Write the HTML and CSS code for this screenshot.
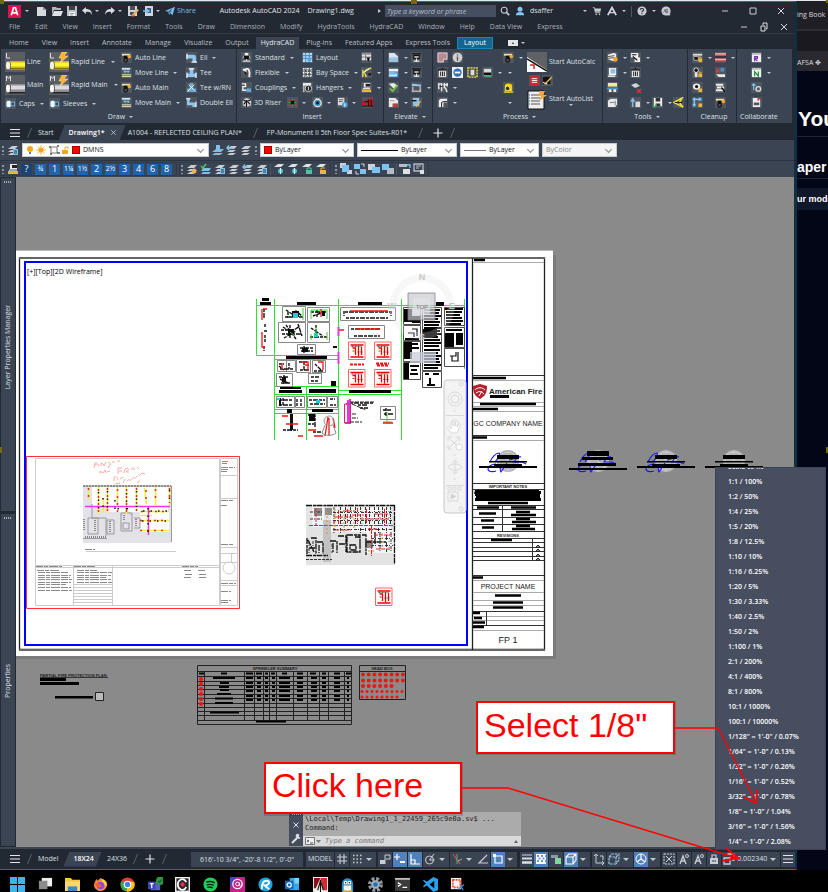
FILE: index.html
```html
<!DOCTYPE html>
<html lang="en">
<head>
<meta charset="utf-8">
<title>Autodesk AutoCAD 2024 - Drawing1.dwg</title>
<link rel="stylesheet" href="styles.css">
</head>
<body>
<svg class="defs" aria-hidden="true">
<defs>
<symbol id="new" viewBox="0 0 12 12"><path d="M1 2h6l3 3v6H1z" fill="#d6d9dd"/><path d="M7 2v3h4" fill="#8c939c"/></symbol>
<symbol id="open" viewBox="0 0 12 12"><path d="M1 2h4l1 1h4v2H3l-2 5z" fill="#aeb4bb"/><path d="M3 6h9l-2 5H1z" fill="#dfe2e5"/></symbol>
<symbol id="save" viewBox="0 0 12 12"><path d="M1 1h10v10H1z" fill="#b9bec4"/><path d="M3 1h6v4H3z" fill="#39414d"/><path d="M3 7h6v4H3z" fill="#f3f4f5"/><path d="M4 8.5h4M4 10h3" stroke="#777" stroke-width=".7"/></symbol>
<symbol id="saveas" viewBox="0 0 12 12"><path d="M1 1h9v10H1z" fill="#d0d3d7"/><path d="M3 1h5v4H3zM3 7h5v3H3z" fill="#4a515c"/><path d="M5 10l5-6 2 1-5 6z" fill="#eab35c"/><path d="M4 11h4" stroke="#d33"/></symbol>
<symbol id="undo" viewBox="0 0 12 12"><path d="M5 2L1 5.500l4 3.500V7c3-1 5 0 6 3 0-4-2-6-6-6z" fill="#d6d9dd"/></symbol>
<symbol id="redo" viewBox="0 0 12 12"><path d="M7 2l4 3.500-4 3.500V7c-3-1-5 0-6 3 0-4 2-6 6-6z" fill="#d6d9dd"/></symbol>
<symbol id="plot" viewBox="0 0 12 12"><path d="M3 1h8v10H3z" fill="#cfd4da"/><path d="M5 3h4v5H5z" fill="#31618d"/><path d="M1 6h5M4 4l3 2-3 2" stroke="#7cc0f0" stroke-width="1.500" fill="none"/></symbol>
<symbol id="plane" viewBox="0 0 12 12"><path d="M0 6L12 1 9 11 6 8 5 11 4 7z" fill="#79bdea"/><path d="M4 7l5-4-3 5z" fill="#245273"/></symbol>
<symbol id="search" viewBox="0 0 12 12"><circle cx="5" cy="5" r="3.600" fill="none" stroke="#c8ccd2" stroke-width="1.300"/><path d="M8 8l3 3" stroke="#c8ccd2" stroke-width="2"/></symbol>
<symbol id="user" viewBox="0 0 12 12"><circle cx="6" cy="4" r="3" fill="#86c5f2"/><path d="M1 11c0-5 10-5 10 0z" fill="#86c5f2"/></symbol>
<symbol id="cart" viewBox="0 0 12 12"><path d="M1 2h2l1 6h6" stroke="#c8ccd2" fill="none"/><path d="M3 3h8l-1 4H4z" fill="#c8ccd2"/><circle cx="5" cy="10" r="1" fill="#ccc"/><circle cx="9" cy="10" r="1" fill="#ccc"/></symbol>
<symbol id="aa" viewBox="0 0 12 12"><path d="M1 11l5-9 5 9" fill="none" stroke="#d3d6da" stroke-width="2.200"/><path d="M3 8h6" stroke="#d3d6da" stroke-width="1.500"/></symbol>
<symbol id="help" viewBox="0 0 12 12"><circle cx="6" cy="6" r="5.500" fill="#c8ccd2"/><path d="M4 4.500c0-2 4-2 4 0 0 1.500-2 1-2 3M6 8.500v1.200" stroke="#222933" stroke-width="1.300" fill="none"/></symbol>
<symbol id="chat" viewBox="0 0 12 12"><path d="M6 .5a5.500 5.500 0 1 1-1 11L11 11V6" fill="#c8ccd2"/><circle cx="6" cy="6" r="5.500" fill="#c8ccd2"/><path d="M3 8l2-4 1 4M6 4h2v4H6z" stroke="#5c6470" fill="none"/></symbol>
<symbol id="min" viewBox="0 0 12 12"><path d="M3 6h6" stroke="#c8ccd2"/></symbol>
<symbol id="max" viewBox="0 0 12 12"><path d="M3 3h6v6H3z" fill="none" stroke="#c8ccd2"/></symbol>
<symbol id="restore" viewBox="0 0 12 12"><path d="M3 5h4v5H3zM5 4V2h4v6H8" fill="none" stroke="#dcdfe3"/></symbol>
<symbol id="close" viewBox="0 0 12 12"><path d="M3 3l6 6M9 3l-6 6" stroke="#d3d6da" fill="none"/></symbol>
<symbol id="bars" viewBox="0 0 12 12"><path d="M1 2.500h10M1 6h10M1 9.500h10" stroke="#e3e6e9" stroke-width="1.100"/></symbol>
<symbol id="plus" viewBox="0 0 12 12"><path d="M6 1.500v9M1.500 6h9" stroke="#e3e6e9" stroke-width="1.200"/></symbol>

<symbol id="pipeY" viewBox="0 0 20 20"><path d="M0 0h20v20H0z" fill="#5b5e62"/><path d="M1.500 1v5H5" stroke="#ddd" fill="none"/><path d="M3 9h17v9H3z" fill="#c9bc00"/><path d="M3 10.500h17v4H3z" fill="#fdf53a"/><path d="M3 16h17v1.500H3z" fill="#7d7300"/><ellipse cx="3" cy="13.500" rx="2.500" ry="4.500" fill="#f2f2e8" stroke="#333" stroke-width=".7"/></symbol>
<symbol id="pipeG" viewBox="0 0 20 20"><path d="M0 0h20v20H0z" fill="#5b5e62"/><path d="M1.500 6V1l2 2.500 2-2.500v5" stroke="#ddd" fill="none"/><path d="M3 9h17v9H3z" fill="#8d8d93"/><path d="M3 10.500h17v4H3z" fill="#dadae0"/><path d="M3 17h17v1.500H3z" fill="#222"/><ellipse cx="3" cy="13.500" rx="2.500" ry="4.500" fill="#fff" stroke="#222" stroke-width=".8"/></symbol>
<symbol id="bolt" viewBox="0 0 20 20"><path d="M13 0h5l-3 4h4l-8 7 2-5h-3z" fill="#ffb12e" stroke="#fff0a0" stroke-width=".5"/></symbol>
<symbol id="auto" viewBox="0 0 12 12"><path d="M1 2h9v2H1z" fill="#efe7a8"/><path d="M3 4h5v3H3z" fill="#111"/><circle cx="5" cy="9" r="2" fill="none" stroke="#111" stroke-width="1.200"/><circle cx="9" cy="5" r="2" fill="#f7a531"/></symbol>
<symbol id="move" viewBox="0 0 12 12"><path d="M1 1h9v2H1z" fill="#c7e4fb"/><path d="M1 8h10v3H1z" fill="#f2eeb4"/><path d="M3 5h6M5 3.500L3 5l2 1.500M7 3.500L9 5 7 6.500" stroke="#86c3ef" fill="none"/><path d="M1 9.500h10" stroke="#333" stroke-width=".7"/></symbol>
<symbol id="ell" viewBox="0 0 12 12"><path d="M1 3h7c2 0 3 1 3 3v5H7V7H1z" fill="#8ec6ee"/><path d="M1 2v6M6 11h6" stroke="#eaf5fd" stroke-width="1.400"/></symbol>
<symbol id="tee" viewBox="0 0 12 12"><path d="M1 7h10v4H1zM4 1h4v7H4z" fill="#8ec6ee"/><path d="M3 2h6M1 6v6M11 6v6" stroke="#eaf5fd" stroke-width="1.300"/></symbol>
<symbol id="teern" viewBox="0 0 12 12"><path d="M1 7h10v4H1zM4 1h4v7H4z" fill="#6aa9d8"/><path d="M3 3l6 6M9 3l-7 7" stroke="#fff"/></symbol>
<symbol id="dell" viewBox="0 0 12 12"><path d="M1 1h3v5h7v5H7V9H1z" fill="#8ec6ee"/><path d="M0 2h5M11 5v6" stroke="#fff"/></symbol>
<symbol id="elbow" viewBox="0 0 12 12"><path d="M2 11V5c0-2 1-3 3-3h6v4H7v5z" fill="#eceef0"/><path d="M5 11V6l2-1h4" stroke="#111" fill="none"/></symbol>
<symbol id="caps" viewBox="0 0 12 12"><path d="M1 4h10v5H1z" fill="#7fb6de"/><path d="M2 3h4v7H2z" fill="#eef5fb"/><path d="M7 5h3v3H7z" fill="#2c4a66"/></symbol>
<symbol id="head" viewBox="0 0 12 12"><path d="M4 1h4v3H4z" fill="#eee"/><path d="M3 4h6l-1 4H4z" fill="#0d0d0d"/><path d="M2 10h8M6 8v2" stroke="#ddd" stroke-width="1.300"/><path d="M3 4l-1 3M9 4l1 3" stroke="#bbb"/></symbol>
<symbol id="flex" viewBox="0 0 12 12"><path d="M2 3h3v3M4 3c5-3 6 2 5 8" stroke="#f1f1f1" fill="none" stroke-width="2"/><path d="M4 5l2 3" stroke="#111" stroke-width="1.500"/></symbol>
<symbol id="hyd" viewBox="0 0 12 12"><path d="M1 2h5M2 2v6M5 2v8M8 1v6M11 1v4M7 3h5M9 6l2 5" stroke="#eceef0" stroke-width="1.500" fill="none"/><path d="M3 5h3" stroke="#111"/></symbol>
<symbol id="coup" viewBox="0 0 12 12"><path d="M1 2h4v3H2v4h4" stroke="#f1f1f1" fill="none" stroke-width="1.500"/><path d="M6 7h5v4H6z" fill="#5ea6dd"/></symbol>
<symbol id="riser" viewBox="0 0 12 12"><path d="M2 3l4-2 5 2v6l-5 2-4-2z" fill="#d7d7d7"/><path d="M3 8l3-4 4 4M6 4v7M2 3l4 2 5-2" stroke="#111" fill="none" stroke-width="1.200"/></symbol>
<symbol id="layout" viewBox="0 0 12 12"><path d="M1 1h10v10H1z" fill="#b8dcf6"/><path d="M1 4h10M1 7h10M4 1v10M8 1v10" stroke="#3983bf"/><path d="M6 6h4v4H6z" fill="#5ba6e0"/></symbol>
<symbol id="bay" viewBox="0 0 12 12"><path d="M1 2h10M1 6h10M1 10h10M2 1v10M6 1v10M10 1v10" stroke="#fff" stroke-width="1.300" stroke-dasharray="1.500 1"/></symbol>
<symbol id="hang" viewBox="0 0 12 12"><path d="M1 1h9v3H1z" fill="#e8e8e8"/><circle cx="7" cy="7" r="3.500" fill="#222" stroke="#ddd"/><path d="M7 5v4M2 2v9" stroke="#eee"/></symbol>
<symbol id="table" viewBox="0 0 12 12"><path d="M1 1h10v8H1z" fill="#e6e6e6"/><path d="M1 1h10v2H1z" fill="#8b9098"/><path d="M1 5.500h10M5 3v6" stroke="#555" stroke-width=".8"/><path d="M6 6h4l-2 5z" fill="#111"/></symbol>
<symbol id="fit" viewBox="0 0 12 12"><path d="M2 7l4-4 5-2M4 7l2 4M2 3v8" stroke="#e9d94a" fill="none" stroke-width="1.600"/><path d="M3 6l6-4" stroke="#fff"/><path d="M8 8h3" stroke="#111" stroke-width="2"/></symbol>
<symbol id="brush" viewBox="0 0 12 12"><path d="M3 1h7v5H3z" fill="#e8e8e8"/><path d="M5 2h5v3H5z" fill="#222"/><path d="M1 8h10v3H1z" fill="#e7b73c"/><path d="M2 7h8" stroke="#fff"/></symbol>
<symbol id="star" viewBox="0 0 12 12"><path d="M1 2l10 8M10 2L2 10" stroke="#d33" stroke-width="1"/><path d="M2 6h8M6 2v8" stroke="#39b54a"/><path d="M4 4h4v4H4z" fill="#111"/></symbol>
<symbol id="ring" viewBox="0 0 12 12"><circle cx="6" cy="6.500" r="4" fill="#2b87c5" stroke="#e2e2e2" stroke-width="1.500"/><path d="M4 1l2 2 2-2" stroke="#eee" fill="none"/><circle cx="6" cy="6.500" r="1.500" fill="#111"/></symbol>
<symbol id="pginfo" viewBox="0 0 12 12"><path d="M1 1h7v8H1z" fill="#d9dde1"/><path d="M2 3h5M2 5h4" stroke="#555"/><circle cx="8.500" cy="8.500" r="3" fill="#4b9fdb"/><path d="M8.500 7v3.500" stroke="#fff"/></symbol>
<symbol id="pump" viewBox="0 0 12 12"><path d="M0 4h4v5H0zM6 2h6v8H6z" fill="#c41420"/><path d="M3 5h5M7 3v7M10 3v7" stroke="#300" stroke-width="1.200"/><path d="M0 10h12" stroke="#111"/></symbol>
<symbol id="page" viewBox="0 0 12 12"><path d="M1 1h6l4 4v6H1z" fill="#d5e6f4"/><path d="M1 6h10v5H1z" fill="#9bc2e2"/></symbol>
<symbol id="pageb" viewBox="0 0 12 12"><path d="M1 2h10v3H1z" fill="#e8f1f8"/><path d="M1 5l10 1-1 5H1z" fill="#7fb8e4"/><path d="M1 9h9" stroke="#fff"/></symbol>
<symbol id="gcheck" viewBox="0 0 12 12"><path d="M1 2l5-1 5 3-5 3z" fill="#e8e8e8"/><path d="M2 7l3 3 5-6" stroke="#6cbf45" stroke-width="2" fill="none"/></symbol>
<symbol id="pred" viewBox="0 0 12 12"><path d="M1 1h7l3 3v7H1z" fill="#e9e9ea"/><path d="M5 7h6v4H5z" fill="#b24047"/><path d="M2 4h5" stroke="#999"/></symbol>
<symbol id="vtool" viewBox="0 0 12 12"><path d="M1 2h10M3 4h6v3H3z" stroke="#111" fill="#ddd" stroke-width="1.300"/><path d="M6 7v4M3 10h6" stroke="#eee" stroke-width="1.200"/></symbol>
<symbol id="slope" viewBox="0 0 12 12"><path d="M1 2l10 1v2L1 4z" fill="#9ccaf0"/><path d="M1 10h10M2 5v5M10 5v5" stroke="#e8e8e8"/></symbol>
<symbol id="edit" viewBox="0 0 12 12"><path d="M2 1h7v9H2z" fill="#8fc1e8"/><path d="M5 10l5-6 1 1-5 6z" fill="#f3c04c"/><path d="M1 4h5" stroke="#111" stroke-width="1.500"/></symbol>
<symbol id="area" viewBox="0 0 12 12"><path d="M1 1h10v7H7v3H1z" fill="#b98a8f"/><path d="M1 1h10v7H7v3H1z" fill="none" stroke="#ded5d6"/></symbol>
<symbol id="info" viewBox="0 0 12 12"><circle cx="6" cy="6" r="5.300" fill="#cfcfcf"/><path d="M6 5v4.500M6 2.500v1.300" stroke="#555" stroke-width="1.500"/></symbol>
<symbol id="trash" viewBox="0 0 12 12"><path d="M2 4h8v7H2z" fill="#e8e8e8"/><path d="M1 3h10M5 1.500h2M4 5v5M6 5v5M8 5v5" stroke="#111" stroke-width="1"/></symbol>
<symbol id="bluec" viewBox="0 0 12 12"><path d="M0 0h12v12H0z" fill="#e9eff6"/><circle cx="6" cy="6" r="4.500" fill="#2f70c0"/><path d="M3 6h6" stroke="#fff" stroke-width="2"/></symbol>
<symbol id="ybox" viewBox="0 0 12 12"><path d="M1 1h10v10H1z" fill="#555" stroke="#f0e640" stroke-width="1.500" stroke-dasharray="2 1"/><path d="M4 3h4v6H4z" fill="#ddd"/></symbol>
<symbol id="cyl" viewBox="0 0 12 12"><path d="M2 2h8v8H2z" fill="#d9d9d9"/><path d="M2 6h8v3H2z" fill="#111"/><path d="M4 9h6v2H4z" fill="#3cab6b"/></symbol>
<symbol id="tape" viewBox="0 0 12 12"><path d="M2 10V4c0-3 8-3 8 0v6" fill="#f2cf1d"/><circle cx="5" cy="7" r="2.500" fill="#333" stroke="#fff079"/><path d="M1 11h10" stroke="#f2cf1d" stroke-width="1.500"/></symbol>
<symbol id="calc" viewBox="0 0 20 20"><path d="M0 0h20v20H0z" fill="#5f6165"/><path d="M0 5l20 13v2H0z" fill="#fff"/><path d="M0 7l20 12" stroke="#111" stroke-width="1.500"/><path d="M3 13h4v4" stroke="#e0202a" fill="none" stroke-width="1.500"/></symbol>
<symbol id="list" viewBox="0 0 20 20"><path d="M1 1h16v18H1z" fill="#eceef0" stroke="#111"/><path d="M4 5h9M4 8h9M4 11h9M4 14h9" stroke="#555"/><path d="M2 5h1M2 8h1M2 11h1M2 14h1" stroke="#2b6fb2"/><path d="M13 1h5l-2 4h4l-8 6 2-5h-3z" fill="#f9a92c"/></symbol>
<symbol id="redl" viewBox="0 0 12 12"><path d="M1 1h10v10H1z" fill="#d2232e"/><path d="M3 4h6M3 6h6M3 8h6" stroke="#fff"/></symbol>
<symbol id="pen" viewBox="0 0 12 12"><path d="M1 2h8v8H1z" fill="#111"/><path d="M2 10l8-8 1 1-7 7z" fill="#f5c34c"/><path d="M1 8l5 2" stroke="#fff"/></symbol>
<symbol id="stack" viewBox="0 0 12 12"><path d="M1 3l6-2 3 1v7l-3 1-6-2z" fill="#f0f0f0"/><path d="M1 5l7-1M1 7l7-1" stroke="#444"/><circle cx="9" cy="8" r="2.500" fill="#f6a42d"/></symbol>
<symbol id="win" viewBox="0 0 12 12"><path d="M2 1h8v8H2z" fill="#f0f0f0"/><path d="M4 2h5v5H4z" fill="#8dbfe6"/><path d="M1 10h8" stroke="#fff" stroke-width="1.400"/></symbol>
<symbol id="frame" viewBox="0 0 12 12"><path d="M1 1h10v4H1z" fill="#f0e9a3"/><path d="M0 6h12v2H0z" fill="#3d92cf"/><path d="M2 8h3v3H2zM7 8h3v3H7z" fill="#e9e9e9"/></symbol>
<symbol id="box" viewBox="0 0 12 12"><path d="M1 4l3-2h7v6l-2 3H1z" fill="#e9e9e9"/><path d="M3 6h5M9 4v5" stroke="#777"/></symbol>
<symbol id="bw" viewBox="0 0 12 12"><path d="M1 1h8v5H1zM5 6h6v5H5z" fill="#f0f0f0"/><path d="M2 3h5M3 5l5 4" stroke="#111" stroke-width="1.300"/></symbol>
<symbol id="erase" viewBox="0 0 12 12"><path d="M1 3l5-2 4 3-5 2z" fill="#cfd2d6"/><path d="M7 7l4 4M11 7l-4 4" stroke="#e0303a" stroke-width="1.500"/></symbol>
<symbol id="up" viewBox="0 0 12 12"><path d="M3 11V3M1 5l2-3 2 3" stroke="#7fc0f2" stroke-width="1.500" fill="none"/><path d="M6 5h5v6H6z" fill="#dcdcdc"/></symbol>
<symbol id="disk" viewBox="0 0 12 12"><path d="M2 1h9v9H2z" fill="#eee"/><path d="M4 1h5v4H4zM4 7h5v3H4z" fill="#333"/><path d="M1 9l2 2 2-3" stroke="#3fb25b" fill="none" stroke-width="1.500"/></symbol>
<symbol id="arrowy" viewBox="0 0 12 12"><path d="M1 6l9-5-3 5 4 5z" fill="none" stroke="#f1de39" stroke-width="1.600"/><path d="M2 6h8" stroke="#111"/></symbol>
<symbol id="lock" viewBox="0 0 12 12"><path d="M1 2h10v2H1z" fill="#ddd" /><path d="M2 5h5v4H2z" fill="#111" stroke="#eee" stroke-width=".7"/><path d="M7 7h4v4H7z" fill="#f0b03c"/><path d="M8 7V5.500h2V7" stroke="#f0b03c" fill="none"/></symbol>
<symbol id="lockh" viewBox="0 0 12 12"><circle cx="4.500" cy="3.500" r="2.500" fill="#111" stroke="#eee"/><path d="M3 6h3v5H3z" fill="#e4e4e4"/><path d="M7 7h4v4H7z" fill="#f0b03c"/><path d="M8 7V5.500h2V7" stroke="#f0b03c" fill="none"/></symbol>
<symbol id="lockn" viewBox="0 0 12 12"><path d="M1 1h3v3H1zM7 1h3v3H7zM1 7h3v3H1z" fill="#b9def8" stroke="#3c8fd0"/><path d="M4 2.500h3M2.500 4v3" stroke="#eee"/><path d="M7 7h4v4H7z" fill="#f0b03c"/></symbol>
<symbol id="eye" viewBox="0 0 12 12"><ellipse cx="5" cy="5" rx="4" ry="3.500" fill="#e9e9e9"/><circle cx="5" cy="5" r="1.700" fill="#111"/><path d="M7 7h4v4H7z" fill="#f0b03c"/></symbol>
<symbol id="redp" viewBox="0 0 12 12"><path d="M0 1h12v3H0zM0 7h12v3H0z" fill="#c9685f"/><path d="M0 2h12M0 8h12" stroke="#f3cdc8"/><path d="M0 5.500h12" stroke="#111"/></symbol>
<symbol id="rb2" viewBox="0 0 12 12"><path d="M1 2l4 4M5 2L1 6" stroke="#e23b3b" stroke-width="1.300"/><path d="M6 1h4v4H6z" fill="#3c8fd0"/><path d="M1 8h10v3H4z" fill="#e9e9e9"/></symbol>
<symbol id="purge" viewBox="0 0 12 12"><path d="M1 2h8v2H1zM2 5h8v2H2zM1 8h8v2H1z" fill="#eee"/><path d="M7 6l4 5" stroke="#111" stroke-width="1.500"/></symbol>
<symbol id="calR" viewBox="0 0 12 12"><path d="M1 2h10v9H1z" fill="#f0edf5"/><path d="M1 1h10v2H1z" fill="#bbb"/><path d="M4 10V5h3v2H4l3 3" stroke="#7a2ea0" stroke-width="1.300" fill="none"/></symbol>
<symbol id="calN" viewBox="0 0 12 12"><path d="M1 2h10v9H1z" fill="#edf5ee"/><path d="M1 1h10v2H1z" fill="#bbb"/><path d="M4 10V5l4 5V5" stroke="#1f8a3b" stroke-width="1.300" fill="none"/></symbol>
<symbol id="gearb" viewBox="0 0 12 12"><path d="M3 9V2M1 4l2-2 2 2" stroke="#7fc0f2" stroke-width="1.300" fill="none"/><circle cx="8" cy="7.500" r="2.500" fill="none" stroke="#dcdcdc" stroke-width="1.500"/></symbol>
<symbol id="pdf" viewBox="0 0 12 12"><path d="M2 1h6l2 2v8H2z" fill="#f2f2f2"/><path d="M7 1h2v3H7z" fill="#e2303a"/><path d="M3 6h6v3H3z" fill="#555"/></symbol>

<symbol id="lay" viewBox="0 0 12 12"><path d="M1 5l4-3h6L8 5zM1 8l3-2h6L7 8zM1 11l3-2h6l-3 2z" fill="#c9cdd2"/></symbol>
<symbol id="layb" viewBox="0 0 12 12"><use href="#lay"/><path d="M6 5h5v6H6z" fill="#7dc0ef"/><path d="M7 7h3M7 9h3" stroke="#244"/></symbol>
<symbol id="layc" viewBox="0 0 12 12"><path d="M4 1h4v4H4z" fill="#7dc0ef"/><path d="M0 8l4-3h8l-3 3zM0 11l3-2h8l-3 2z" fill="#8bb9da"/></symbol>
<symbol id="laya" viewBox="0 0 12 12"><use href="#lay"/><path d="M7 4H1M3 1.500L1 4l2 2" stroke="#7dc0ef" stroke-width="1.500" fill="none"/></symbol>
<symbol id="layo" viewBox="0 0 12 12"><use href="#lay"/><circle cx="8" cy="8" r="2.500" fill="#efb45a"/></symbol>
<symbol id="layg" viewBox="0 0 12 12"><path d="M3 5h8l-2 3H1zM3 9h8l-2 2H1z" fill="#7dbfe8"/><path d="M1 3l2 2 3-4" stroke="#4fc26b" stroke-width="1.500" fill="none"/></symbol>
<symbol id="layt" viewBox="0 0 12 12"><path d="M1 4l4-3h6L8 4z" fill="#dfe2e5"/><circle cx="7.500" cy="8" r="2.500" fill="#4ec5cf"/><path d="M7.500 5v6" stroke="#cff"/></symbol>
<symbol id="layk" viewBox="0 0 12 12"><path d="M1 4l4-3h6L8 4z" fill="#dfe2e5"/><path d="M5 7h6v4H5z" fill="#4ec5a0"/><path d="M6 7V5h4v2" stroke="#4ec5a0" fill="none"/></symbol>
<symbol id="layy" viewBox="0 0 12 12"><path d="M1 4l4-3h6L8 4z" fill="#dfe2e5"/><path d="M5 7h6v4H5z" fill="#efb24a"/><path d="M6 7V5h4" stroke="#efb24a" fill="none"/></symbol>
<symbol id="ord" viewBox="0 0 12 12"><path d="M0 0h6v5H0zM7 7h5v4H7z" fill="#cfd3d8"/><path d="M2 2h7v7H2z" fill="#7cc3f5"/></symbol>
<symbol id="ord2" viewBox="0 0 12 12"><path d="M0 1h6v5H0zM6 6h6v5H6z" fill="#7cc3f5"/><path d="M7 1h3v3M2 8v3h3" stroke="#cfd3d8" fill="none"/></symbol>
<symbol id="ord3" viewBox="0 0 12 12"><path d="M0 1h7v6H0z" fill="#cfd3d8"/><path d="M4 4h8v6H4z" fill="#7cc3f5"/></symbol>
<symbol id="ord4" viewBox="0 0 12 12"><path d="M0 1h7v6H0z" fill="#7cc3f5"/><path d="M5 5h7v6H5z" fill="#b4bcc6"/></symbol>
<symbol id="ann" viewBox="0 0 12 12"><path d="M0 1h8v3H0z" fill="#b6bcc5"/><path d="M4 6h7v5H4z" fill="#dfe2e5"/><path d="M8 2h3v3" stroke="#7cc3f5" fill="none" stroke-width="1.300"/></symbol>
<symbol id="ann2" viewBox="0 0 12 12"><path d="M1 1h9v7H1z" fill="none" stroke="#b6bcc5" stroke-width="1.300"/><path d="M3 3h5M3 5h3" stroke="#b6bcc5"/><path d="M7 7h4v4H7z" fill="#dfe2e5"/></symbol>

<symbol id="grid" viewBox="0 0 12 12"><path d="M4 1v10M8 1v10M1 4h10M1 8h10" stroke="#c9ced5" stroke-width="1.100"/></symbol>
<symbol id="dots" viewBox="0 0 12 12"><path d="M2 2.500h9M2 6h9M2 9.500h9" stroke="#c9ced5" stroke-width="1.400" stroke-dasharray="1.500 2"/></symbol>
<symbol id="snap" viewBox="0 0 12 12"><path d="M1 7h5v4H1z" fill="#c9ced5"/><path d="M6 11V2h5v4H7" stroke="#c9ced5" fill="none"/></symbol>
<symbol id="dyn" viewBox="0 0 12 12"><path d="M3 1v6M0 4h6" stroke="#fff" stroke-width="1.200"/><path d="M6 8h5v2H6z" fill="#fff"/></symbol>
<symbol id="ortho" viewBox="0 0 12 12"><path d="M2 1v10h9M2 7h4v4" stroke="#fff" fill="none" stroke-width="1.200"/></symbol>
<symbol id="polar" viewBox="0 0 12 12"><circle cx="5.500" cy="7" r="4" fill="none" stroke="#c9ced5"/><path d="M5.500 7L10 1M5.500 7h5" stroke="#c9ced5"/></symbol>
<symbol id="iso" viewBox="0 0 12 12"><path d="M2 1l7 10" stroke="#d24b4b" stroke-width="1.300"/><path d="M6 1v10" stroke="#4bb868"/><path d="M7 8l4-2" stroke="#aaa"/></symbol>
<symbol id="ang" viewBox="0 0 12 12"><path d="M10 2L2 10h9" stroke="#c9ced5" fill="none" stroke-width="1.200"/></symbol>
<symbol id="osnap" viewBox="0 0 12 12"><path d="M3 3h7v7H3z" fill="none" stroke="#fff" stroke-width="1.200"/><path d="M1 1h3v3H1z" fill="#fff"/></symbol>
<symbol id="lw" viewBox="0 0 12 12"><path d="M1 2h10" stroke="#d6dade"/><path d="M1 5.500h10" stroke="#d6dade" stroke-width="2"/><path d="M1 9.500h10" stroke="#d6dade" stroke-width="2.600"/></symbol>
<symbol id="check" viewBox="0 0 12 12"><path d="M1 1h10v10H1z" fill="#fff"/><path d="M2 3h9M2 8h9" stroke="#6b95cb" stroke-width="2" stroke-dasharray="2 2"/><path d="M3.500 5.500h7" stroke="#6b95cb" stroke-width="2" stroke-dasharray="2 2"/></symbol>
<symbol id="sel" viewBox="0 0 12 12"><path d="M1 2h7v3H1z" fill="#8f98a4"/><path d="M5 5h6v6H5z" fill="#7fd89b"/></symbol>
<symbol id="cube" viewBox="0 0 12 12"><path d="M1 4h7v7H1zM1 4l3-3h7v6l-3 4M8 4l3-3" fill="none" stroke="#fff" stroke-width="1.100"/></symbol>
<symbol id="cube2" viewBox="0 0 12 12"><path d="M1 4h7v7H1zM1 4l3-3h7v6l-3 4M8 4l3-3" fill="none" stroke="#9fc6ea" stroke-width="1.200" stroke-dasharray="2.500 1"/></symbol>
<symbol id="ucs" viewBox="0 0 12 12"><path d="M3 1v9h8M1 3l2-2 2 2M9 8l2 2-2 2M7 3h3v4" stroke="#c9ced5" fill="none"/></symbol>
<symbol id="giz" viewBox="0 0 12 12"><circle cx="6" cy="6" r="5" fill="none" stroke="#fff"/><path d="M6 1v5L2 9M6 6l4 3" stroke="#fff" fill="none" stroke-width="1.200"/></symbol>
<symbol id="annv" viewBox="0 0 12 12"><path d="M1 1h10v10H1z" stroke="#c9ced5" fill="none" stroke-dasharray="2 1"/><path d="M3 3l6 6M9 3L3 9" stroke="#c9ced5"/></symbol>
<symbol id="anns" viewBox="0 0 12 12"><path d="M2 11l3-8 3 8M3 8h4" stroke="#c9ced5" fill="none" stroke-width="1.400"/><circle cx="9" cy="3" r="1.500" fill="none" stroke="#c9ced5"/></symbol>
<symbol id="padl" viewBox="0 0 12 12"><path d="M2 5h8v6H2z" fill="#c9ced5"/><path d="M4 5V2h4v3" stroke="#c9ced5" fill="none" stroke-width="1.200"/><path d="M4 8h4" stroke="#3b4453"/></symbol>
<symbol id="vps" viewBox="0 0 12 12"><path d="M1 5h6v6H1zM5 3V1h6v6H9" stroke="#c9ced5" fill="none" stroke-width="1.300"/></symbol>

<g id="seal"><circle cy="-1" r="11" fill="#b2b2b2"/><circle cy="-1" r="9" fill="none" stroke="#d0d0d0"/><path d="M0-12v22M-8-8l16 14" stroke="#c8c8c8"/></g>
<path id="sign" d="M-12 2c-5 0-8 3-8 5 0 3 5 3 8 2M-18 0c2-5 6-9 9-9 2 2-1 5-4 9M-8 2c0 3 0 7 1 8l6-9M1-2c4 0 9-4 12-3M9-4l-3 4h8l4 2" fill="none" stroke="#1414ff" stroke-width="1.100"/>
<g id="redDetail"><path d="M0 0h16.500v17.500H0z" fill="#fff" stroke="#f66" stroke-width="1"/><path d="M2 3h13M4 6h3v7M10 5v9M13 5v8M2 15h13" stroke="#e00" stroke-width="1.300" fill="none"/><path d="M3 4.500h10M4 9h3M9 10h5" stroke="#511" stroke-dasharray="2 1" stroke-width=".8"/></g>
</defs>
</svg>

<div class="desktop">
<main class="app">
<header class="title">
<button class="logo" aria-label="Application menu"><svg viewBox="0 0 14 14"><path d="M0 0h14v14H0z" fill="#e2114b"/><path d="M3.500 11L6 3h2l2.500 8M5 8.500h4" fill="none" stroke="#fff" stroke-width="1.800"/></svg></button><i class="car"></i>
<div class="qat">
<button aria-label="New"><svg class="ic"><use href="#new"/></svg></button>
<button aria-label="Open"><svg class="ic"><use href="#open"/></svg></button>
<button aria-label="Save"><svg class="ic"><use href="#save"/></svg></button>
<button aria-label="Undo" class="dd"><svg class="ic"><use href="#undo"/></svg></button>
<button aria-label="Redo" class="dd"><svg class="ic"><use href="#redo"/></svg></button>
<button aria-label="Save as"><svg class="ic"><use href="#saveas"/></svg></button>
<button aria-label="Plot" class="dd"><svg class="ic"><use href="#plot"/></svg></button>
</div>
<button class="share"><svg class="ic sm"><use href="#plane"/></svg>Share</button>
<h1>Autodesk AutoCAD 2024</h1><span class="doc">Drawing1.dwg</span>
<i class="tri"></i><input class="find" type="search" aria-label="Search" placeholder="Type a keyword or phrase">
<div class="acct"><svg class="ic sm"><use href="#search"/></svg><svg class="ic sm"><use href="#user"/></svg><span>dsaffer</span></div>
<div class="links"><i class="car"></i><svg class="ic sm"><use href="#cart"/></svg><svg class="ic sm"><use href="#aa"/></svg><i class="car"></i><i class="vsep"></i><svg class="ic sm"><use href="#help"/></svg><i class="car"></i><svg class="ic sm"><use href="#chat"/></svg></div>
<div class="wbtns"><button aria-label="Minimize"><svg class="ic"><use href="#min"/></svg></button><button aria-label="Maximize"><svg class="ic"><use href="#max"/></svg></button><button aria-label="Close"><svg class="ic"><use href="#close"/></svg></button></div>
</header>

<nav class="menubar"><button>File</button><button>Edit</button><button>View</button><button>Insert</button><button>Format</button><button>Tools</button><button>Draw</button><button>Dimension</button><button>Modify</button><button>HydraTools</button><button>HydraCAD</button><button>Window</button><button>Help</button><button>Data View</button><button>Express</button>
<div class="wbtns doc-btns"><button aria-label="Minimize drawing"><svg class="ic"><use href="#min"/></svg></button><button aria-label="Restore drawing"><svg class="ic"><use href="#restore"/></svg></button><button aria-label="Close drawing"><svg class="ic"><use href="#close"/></svg></button></div></nav>

<nav class="tabs"><button>Home</button><button>View</button><button>Insert</button><button>Annotate</button><button>Manage</button><button>Visualize</button><button>Output</button><button class="on">HydraCAD</button><button>Plug-ins</button><button>Featured Apps</button><button>Express Tools</button><button class="ctx">Layout</button><span class="pill"><i></i></span><i class="car"></i></nav>

<section class="ribbon">
<div class="panel draw"><div class="cols">
<div class="col c1"><button class="big"><svg><use href="#pipeY"/></svg>Line</button><button class="big"><svg><use href="#pipeG"/></svg>Main</button><button class="cmd dd"><svg class="ic rb"><use href="#caps"/></svg>Caps</button></div>
<div class="col c2"><button class="big dd"><svg><use href="#pipeY"/><use href="#bolt"/></svg>Rapid Line</button><button class="big dd"><svg><use href="#pipeG"/><use href="#bolt"/></svg>Rapid Main</button><button class="cmd dd"><svg class="ic rb"><use href="#caps"/></svg>Sleeves</button></div>
<div class="col c3"><button class="cmd"><svg class="ic rb"><use href="#auto"/></svg>Auto Line</button><button class="cmd dd"><svg class="ic rb"><use href="#move"/></svg>Move Line</button><button class="cmd"><svg class="ic rb"><use href="#auto"/></svg>Auto Main</button><button class="cmd dd"><svg class="ic rb"><use href="#move"/></svg>Move Main</button></div>
<div class="col"><button class="cmd dd"><svg class="ic rb"><use href="#ell"/></svg>Ell</button><button class="cmd"><svg class="ic rb"><use href="#tee"/></svg>Tee</button><button class="cmd"><svg class="ic rb"><use href="#teern"/></svg>Tee w/RN</button><button class="cmd"><svg class="ic rb"><use href="#dell"/></svg>Double Ell</button></div>
</div><footer class="dd">Draw</footer></div>

<div class="panel insert"><div class="cells">
<button class="cmd dd"><svg class="ic rb"><use href="#head"/></svg>Standard</button><button class="cmd"><svg class="ic rb"><use href="#layout"/></svg>Layout</button><button class="cmd" aria-label="Table"><svg class="ic rb"><use href="#table"/></svg></button>
<button class="cmd dd"><svg class="ic rb"><use href="#flex"/></svg>Flexible</button><button class="cmd dd"><svg class="ic rb"><use href="#bay"/></svg>Bay Space</button><button class="cmd dd" aria-label="Fitting"><svg class="ic rb"><use href="#fit"/></svg></button>
<button class="cmd dd"><svg class="ic rb"><use href="#coup"/></svg>Couplings</button><button class="cmd dd"><svg class="ic rb"><use href="#hang"/></svg>Hangers</button><button class="cmd dd" aria-label="Brush"><svg class="ic rb"><use href="#brush"/></svg></button>
<div class="line"><button class="cmd"><svg class="ic rb"><use href="#riser"/></svg>3D Riser</button><button class="cmd dd" aria-label="Node"><svg class="ic rb"><use href="#star"/></svg></button><button class="cmd dd" aria-label="Valve"><svg class="ic rb"><use href="#ring"/></svg></button><button class="cmd dd" aria-label="Data"><svg class="ic rb"><use href="#pginfo"/></svg></button><button class="cmd" aria-label="Pump"><svg class="ic rb"><use href="#pump"/></svg></button></div>
</div><footer>Insert</footer></div>

<div class="panel elev"><div class="cells two">
<button class="cmd dd" aria-label="Elevate"><svg class="ic rb"><use href="#page"/></svg></button><button class="cmd" aria-label="Head up"><svg class="ic rb"><use href="#vtool"/></svg></button>
<button class="cmd dd" aria-label="Plane"><svg class="ic rb"><use href="#pageb"/></svg></button><button class="cmd" aria-label="Drop"><svg class="ic rb"><use href="#vtool"/></svg></button>
<button class="cmd dd" aria-label="Verify"><svg class="ic rb"><use href="#gcheck"/></svg></button><button class="cmd dd" aria-label="Slope"><svg class="ic rb"><use href="#slope"/></svg></button>
<button class="cmd dd" aria-label="Report"><svg class="ic rb"><use href="#pred"/></svg></button><button class="cmd" aria-label="Edit elevation"><svg class="ic rb"><use href="#edit"/></svg></button>
</div><footer class="dd">Elevate</footer></div>

<div class="panel proc"><div class="cols">
<div class="col c5">
<div class="line"><button class="cmd" aria-label="Area"><svg class="ic rb"><use href="#area"/></svg></button><button class="cmd" aria-label="Information"><svg class="ic rb"><use href="#info"/></svg></button></div>
<div class="line"><button class="cmd" aria-label="Delete"><svg class="ic rb"><use href="#trash"/></svg></button><button class="cmd" aria-label="Link"><svg class="ic rb"><use href="#bluec"/></svg></button><button class="cmd" aria-label="Region"><svg class="ic rb"><use href="#ybox"/></svg></button><button class="cmd dd" aria-label="Cylinder"><svg class="ic rb"><use href="#cyl"/></svg></button></div>
<div class="line"><button class="cmd dd" aria-label="Hydrant"><svg class="ic rb"><use href="#hyd"/></svg></button></div>
<div class="line"><button class="cmd dd" aria-label="Elbow"><svg class="ic rb"><use href="#elbow"/></svg></button></div></div>
<div class="col c6"><button class="cmd dd" aria-label="Auto head"><svg class="ic rb"><use href="#auto"/></svg></button><button class="cmd dd lone" aria-label="More"></button><button class="cmd" aria-label="Measure"><svg class="ic rb"><use href="#tape"/></svg></button><button class="cmd dd lone" aria-label="More tools"></button></div>
<div class="col c7"><button class="big"><svg><use href="#calc"/></svg>Start AutoCalc</button><div class="line"><button class="cmd" aria-label="Report"><svg class="ic rb"><use href="#redl"/></svg></button><button class="cmd" aria-label="Mark"><svg class="ic rb"><use href="#pen"/></svg></button></div><button class="big"><svg><use href="#list"/></svg><span class="stk dd">Start AutoList</span></button></div>
</div><footer class="dd">Process</footer></div>

<div class="panel tools"><div class="cells">
<button class="cmd dd" aria-label="Layers"><svg class="ic rb"><use href="#stack"/></svg></button><button class="cmd dd" aria-label="Swap"><svg class="ic rb"><use href="#bw"/></svg></button><i></i><i></i>
<button class="cmd dd" aria-label="Window"><svg class="ic rb"><use href="#win"/></svg></button><button class="cmd" aria-label="Delete all"><svg class="ic rb"><use href="#trash"/></svg></button><i></i><i></i>
<button class="cmd" aria-label="Frame"><svg class="ic rb"><use href="#frame"/></svg></button><button class="cmd" aria-label="Erase"><svg class="ic"><use href="#erase"/></svg></button><i></i><i></i>
<button class="cmd" aria-label="Box"><svg class="ic rb"><use href="#box"/></svg></button><button class="cmd dd" aria-label="Raise"><svg class="ic rb"><use href="#up"/></svg></button><button class="cmd dd" aria-label="Store"><svg class="ic rb"><use href="#disk"/></svg></button><button class="cmd" aria-label="Direction"><svg class="ic rb"><use href="#arrowy"/></svg></button>
</div><footer class="dd">Tools</footer></div>

<div class="panel clean"><div class="cells two">
<button class="cmd dd" aria-label="Lock pipe"><svg class="ic rb"><use href="#lock"/></svg></button><button class="cmd dd" aria-label="Pipes"><svg class="ic rb"><use href="#redp"/></svg></button>
<button class="cmd" aria-label="Lock head"><svg class="ic rb"><use href="#lockh"/></svg></button><button class="cmd" aria-label="Break"><svg class="ic rb"><use href="#rb2"/></svg></button>
<button class="cmd" aria-label="View lock"><svg class="ic rb"><use href="#eye"/></svg></button><button class="cmd" aria-label="Purge"><svg class="ic rb"><use href="#purge"/></svg></button>
<button class="cmd" aria-label="Lock nodes"><svg class="ic rb"><use href="#lockn"/></svg></button><button class="cmd" aria-label="Clean"><svg class="ic rb"><use href="#auto"/></svg></button>
</div><footer>Cleanup</footer></div>

<div class="panel coll"><div class="col">
<button class="cmd dd" aria-label="Revit"><svg class="ic rb"><use href="#calR"/></svg></button><button class="cmd dd" aria-label="Navisworks"><svg class="ic rb"><use href="#calN"/></svg></button><button class="cmd" aria-label="Settings"><svg class="ic rb"><use href="#gearb"/></svg></button><button class="cmd" aria-label="PDF"><svg class="ic rb"><use href="#pdf"/></svg></button>
</div><footer>Collaborate</footer></div>
</section>

<nav class="files"><button aria-label="Menu" class="ham"><svg class="ic"><use href="#bars"/></svg></button><i class="slash"></i><button>Start</button><button class="cur"><span>Drawing1*</span><svg class="ic xs"><use href="#close"/></svg></button><button>A1004 - REFLECTED CEILING PLAN*</button><i class="slash wide"></i><button>FP-Monument II 5th Floor Spec Suites-R01*</button><i class="slash wide"></i><button aria-label="New tab"><svg class="ic"><use href="#plus"/></svg></button><i class="slash"></i></nav>

<div class="tb1">
<i class="grip"></i><svg class="ic"><use href="#layb"/></svg>
<div class="box w1"><svg viewBox="0 0 43 10" class="lyr"><circle cx="4" cy="4" r="3" fill="#f5a81c"/><path d="M3 7h2v2H3z" fill="#777"/><circle cx="15" cy="5" r="2.600" fill="#f5a81c"/><path d="M15 0v10M10 5h10M11.500 1.500l7 7M18.500 1.500l-7 7" stroke="#f5a81c" stroke-width=".8"/><path d="M25 2h6v6h-6z" fill="none" stroke="#777"/><path d="M23 2h2M31 8h3M24 9h2M31 1h2" stroke="#555" stroke-width="1.500"/><path d="M36 5h6v4h-6z" fill="#f5a81c"/><path d="M39 5V2h3v2" fill="none" stroke="#f5a81c"/></svg><i class="sw"></i><select aria-label="Layer"><option>DMNS</option></select></div>
<div class="icset"><svg class="ic"><use href="#layc"/></svg><svg class="ic"><use href="#laya"/></svg><svg class="ic"><use href="#lay"/></svg></div><i class="grip"></i>
<div class="box w2"><i class="sw"></i><select aria-label="Color"><option>ByLayer</option></select></div>
<div class="box w3"><i class="ln"></i><select aria-label="Linetype"><option>ByLayer</option></select></div>
<div class="box w4"><i class="ln thin"></i><select aria-label="Lineweight"><option>ByLayer</option></select></div>
<div class="box w5"><select aria-label="Plot style" disabled><option>ByColor</option></select></div>
</div>

<div class="tb2">
<div class="bar"><i class="grip"></i><svg class="ic"><use href="#brush"/></svg><button class="sz dk">?</button><button class="sz fr">¾</button><button class="sz">1</button><button class="sz fr">1¼</button><button class="sz fr">1½</button><button class="sz">2</button><button class="sz fr">2½</button><button class="sz">3</button><button class="sz">4</button><button class="sz">6</button><button class="sz">8</button></div>
<div class="bar"><i class="grip"></i><svg class="ic"><use href="#layo"/></svg><svg class="ic"><use href="#layg"/></svg><svg class="ic"><use href="#layb"/></svg><svg class="ic"><use href="#lay"/></svg><svg class="ic"><use href="#laya"/></svg><svg class="ic"><use href="#layb"/></svg><i class="vsep"></i><svg class="ic"><use href="#layt"/></svg><svg class="ic"><use href="#layt"/></svg><svg class="ic"><use href="#layk"/></svg><svg class="ic"><use href="#layy"/></svg></div>
<div class="bar"><i class="grip"></i><svg class="ic"><use href="#ord"/></svg><svg class="ic"><use href="#ord2"/></svg><svg class="ic"><use href="#ord3"/></svg><svg class="ic"><use href="#ord4"/></svg><i class="vsep"></i><svg class="ic"><use href="#ann"/></svg><svg class="ic"><use href="#ann2"/></svg></div>
</div>

<div class="work">
<aside class="pals"><div class="pal p1"><i class="hgrip"></i><span>Layer Properties Manager</span></div><div class="pal p2"><i class="hgrip"></i><span>Properties</span></div></aside>
<div class="canvas">
<svg class="dwg" viewBox="16 177 780 670" preserveAspectRatio="xMinYMin slice" role="img" aria-label="Layout 18X24">
<path d="M16 255h540v404H16z" fill="#7b7b7b"/><path d="M16 251h537v405H16z" fill="#fff"/>
<path d="M16 250.500h537" stroke="#b9b9b9"/>
<path d="M19.500 258h525v391.500h-525z" fill="none" stroke="#222" stroke-width="1.300"/><path d="M19 258h526M19 650h526" stroke="#666" stroke-width="2"/><path d="M472.500 258v392" stroke="#222" stroke-width="1.300"/>
<path d="M25 262h442v383H25z" fill="none" stroke="#00f" stroke-width="2"/>
<text x="27" y="274" class="lbl">[+][Top][2D Wireframe]</text>

<!-- title block -->
<g stroke="#333" stroke-width="1"><path d="M473 262.500h71M473 380.500h71M473 402.500h71M473 406.500h71M473 411.500h71M473 440.500h71M473 580.500h71M473 592.500h71M473 600.500h71M473 605.500h71M473 616.500h71M473 620.500h71M473 630.500h71" stroke="#aaa"/><path d="M473 375.500h71M473 435.500h71M473 483.500h71M473 489.500h71M473 505.500h71M473 509.500h71M473 517.500h71M473 524.500h71M473 531.500h71M473 538.500h71M473 542.500h71M473 547.500h71M473 551.500h71M473 556.500h71M473 560.500h71M473 575.500h71M473 611.500h71M473 625.500h71M502.500 505v26M532.500 538v22M486.500 611v14"/></g>
<g stroke="#000" stroke-width="2.600"><path d="M474 260h11M473 378h33M480 404h56M473 409h25M473 437.500h14M488 503h40M477 507.500h22M511 507.500h25M479 513.500h17M516 512h14M511 515h25M481 520.500h13M516 519h14M512 522h24M482 527.500h12M516 526h14M512 529h23M491 540h21M473 577.500h10M495 595.500h26M493 602.500h30M493 607.500h30M473 613h7M474 618h8M473 622.500h12M473 627h11"/></g>
<path d="M475 490h64v1h2v3h-1v4h1v3h-66v-3h1v-2h-1v-2h-1z"/>
<path d="M538 545l-2 2h4zM538 549l-2 2h4zM538 554l-2 2h4zM538 558l-2 2h4z" fill="none" stroke="#222"/>
<path d="M473 386l7-2 7 2c0 7-2 10-7 13-5-3-7-6-7-13z" fill="#b5202c"/><path d="M475 390c3-3 7-3 10 0M476 393c3-2 5-2 8 1M479 396l3-5" stroke="#fff" fill="none"/>
<text x="489" y="394" class="af">American Fire</text><path d="M490 396.500h19" stroke="#000" stroke-width="3"/>
<text x="508" y="426" class="tb" text-anchor="middle">GC COMPANY NAME</text><text x="508" y="488" class="tiny" text-anchor="middle">IMPORTANT NOTES</text><text x="508" y="537" class="tiny" text-anchor="middle">REVISIONS</text><text x="508" y="589" class="tb" text-anchor="middle">PROJECT NAME</text><text x="508" y="643" class="fp" text-anchor="middle">FP 1</text>

<!-- engineer stamps -->
<g transform="translate(508 462)"><use href="#seal"/><use href="#sign"/><path d="M-11-7h22v4h-22zM-19-1h38v1.500h-38zM-14 2h28v2h-28zM-29 4h58v2h-58z"/></g>
<g transform="translate(598 462)"><use href="#seal"/><use href="#sign"/><path d="M-11-11h22v5h-22zM-16-5h31v3h-31zM-20 1h38v3h-38zM-29 6h58v2h-58z"/></g>
<g transform="translate(666 462)"><use href="#seal"/><use href="#sign"/><path d="M-11-7h22v4h-22zM-19-1h38v1.500h-38zM-14 2h28v2h-28zM-29 4h58v2h-58z"/></g>
<g transform="translate(734 462)"><use href="#seal"/><path d="M-11-7h22v4h-22zM-19-1h38v1.500h-38zM-14 2h28v2h-28zM-29 4h58v2h-58z"/></g>

<!-- details sheet -->
<path d="M256.500 299v56.500H338M274.500 299v141M338.500 299v141M401.500 299v141M464.500 299v70M256 305.500h209M274 359.500h64M274 386.500h64M338 390.500h63M274 394.500h127M274 409.500h64M274 413.500h64M306.500 387v53" fill="none" stroke="#2be52b" stroke-width="1"/>
<path d="M262 298h7v3h-7zM260 302h11v3h-11zM297 302h19v3h-19zM358 302h24v3h-24zM286 356h41v3h-41zM280 387h21v2h-21zM279 390h23v3h-23zM309 389h27v4h-27zM349 390h42v3h-42zM287 409h5v4h-5zM312 409h21v3h-21z"/>
<g fill="#fff" stroke="#888"><path d="M282.500 306.500h23v15h-23zM307.500 307.500h22v14h-22zM278.500 322.500h27v20h-27zM307.500 322.500h22v20h-22zM297.500 344.500h18v10h-18zM340.500 307.500h55v13h-55zM348.500 325.500h36v13h-36zM277.500 360.500h9v11h-9zM286.500 360.500h9v11h-9zM296.500 359.500h14v13h-14zM312.500 360.500h13v12h-13zM276.500 373.500h16v13h-16zM308.500 373.500h13v10h-13zM276.500 396.500h18v11h-18zM295.500 396.500h9v11h-9zM307.500 396.500h19v11h-19zM327.500 396.500h10v11h-10zM380.500 406.500h15v13h-15z"/></g>
<g fill="none" stroke="#111" stroke-width="1.400"><path d="M286 310l6 4 4-3 6 5M285 317h18M288 312v6M311 312h15M313 316l8-3M317 310v7M283 327l8 5 9-6M282 334h20M290 325v14M284 338l12-7M310 337h17M316 325v10M300 348h13M301 351h12M304 346v7M344 311v5M391 311v5M345 312h45M346 318h42M351 329h30M354 336h26M279 364h5M280 369h14M289 363v6M299 362h8M300 370h9M304 362v8M315 364l6 6M314 371h10M279 377h10M281 383h9M284 375v9M311 377h8M311 381h7M279 400h14M279 405h14M283 398v7M297 399v7M301 399v7M309 400h16M310 404h15M330 399h5M330 405h6M291 414v17M283 430h15M308 415h7v12M308 424h6M313 432h8M383 410h8M384 414h9M386 408v8M350 403h24M358 405h9M360 408h8M264 309v9M265 324v4M264 331h4M265 335v7M264 346v5M286 325l10 14M298 324l4 12M281 330h12M311 328l12 8M280 379l8 4M279 366l5 4" stroke-dasharray="3 1 5 1"/></g>
<g fill="#0c0c0c"><path d="M292 311h7v6h-7zM288 329h6v6h-6zM302 348h6v4h-6zM322 311h3v5h-3zM282 377h4v5h-4zM290 414h3v16h-3zM309 414h6v7h-6zM279 398h2v8h-2zM331 381h5v5h-5zM333 346h4v2h-4z"/></g>
<path d="M293 313h5v5h-5zM314 333h4v4h-4zM277 398h3v2h-3zM316 400h4v3h-4z" fill="#25c9d8"/>
<path d="M303 308v12M311 319v-9h16v9M311 340v-6M327 340v-8M290 332l5 4M316 327v9M387 412v11M383 422h9" stroke="#3bd03b" fill="none"/>
<path d="M350 311h38M355 329h25M262 309v11M261 333h1v14h3M263 309h4M282 416h6M286 424h12M328 417l-3 19M329 418v18M308 430h8M314 436h9M302 362h6v9M305 365h4M318 362h5v8M338 330h6M282 363v6M321 309v8M298 436h5M383 423h10M333 418l2 10" stroke="#f01616" stroke-width="1.300" fill="none"/>
<path d="M338.500 327v9M338.500 352v12M348 400v23M350 399v25M346 404h5M345 423h6" stroke="#e23bdc" stroke-width="2"/><path d="M344.500 404h6v19h-6z" fill="none" stroke="#e02070"/><path d="M350 402l24 0M352 404l14 6M352 414h5M352 418h6M350 422h12" stroke="#222" stroke-dasharray="4 1"/>
<circle cx="329" cy="421" r="5" fill="none" stroke="#999"/><path d="M325 425l-3 8c2 3 12 3 14 0l-3-8" fill="none" stroke="#888"/>
<use href="#redDetail" x="348.500" y="342"/><use href="#redDetail" x="374.500" y="342"/><use href="#redDetail" x="348.500" y="369.500"/><use href="#redDetail" x="374.500" y="369.500"/>
<path d="M350 364.500h14M376 363.500h13M377 365.500h12" stroke="#f01616" stroke-width="2" stroke-dasharray="3 1"/>
<g fill="#fff" stroke="#222" stroke-width=".8"><path d="M403.500 307.500h17v17h-17zM403.500 325.500h17v15h-17zM403.500 341.500h17v20h-17zM403.500 362.500h17v17h-17zM422.500 307.500h19v63h-19zM422.500 371.500h19v16h-19zM444.500 307.500h20v18h-20zM444.500 327.500h20v20h-20zM444.500 348.500h20v18h-20z"/></g>
<g fill="#050505"><path d="M404 309h8v13h-8zM412 316h8v7h-8zM404 342h8v17h-8zM404 363h5v16h-5zM445 308h18v2h-18zM445 333h9v14h-9zM456 333h7v12h-7zM436 302h8v4h-8zM423 329h14v8h-14z"/></g>
<path d="M424 310h16M424 313h15M424 316h17M424 319h14M424 322h16M424 325h15M424 328h17M424 331h16M424 334h17M424 337h14M424 340h16M424 343h17M424 346h15M424 350h16M424 353h14M424 356h17M424 359h15M424 362h16M424 365h17M424 368h14M446 312h16M446 315h14M446 318h16M446 321h17M446 324h15M446 330h16M405 339h14M412 344h6M412 348h7M410 366h9M411 370h6M410 374h8M425 374h4M433 374h6M430 378v6M427 385h8" stroke="#050505" stroke-width="2"/>
<path d="M408 333h6v4M412 329h5v7M450 356h6v-4M458 352v9h-6v-5" fill="none" stroke="#111" stroke-width="1.200"/>

<!-- view cube -->
<g><circle cx="422" cy="307" r="29" fill="none" stroke="#dedede" stroke-opacity=".25" stroke-width="7"/><path d="M408 293h27v27h-27z" fill="#c9cbce" fill-opacity=".7" stroke="#777" stroke-opacity=".7"/><path d="M413 298h17v17h-17z" fill="#e2e5ea" fill-opacity=".6"/><path d="M410 352h26v11h-26z" fill="#c9ccda" fill-opacity=".75"/>
<text class="cube" x="422" y="309" text-anchor="middle">TOP</text><text class="dir" x="422" y="280" text-anchor="middle">N</text><text class="dir" x="392" y="309" text-anchor="middle">W</text><text class="dir" x="452" y="309" text-anchor="middle">E</text><text class="dir" x="422" y="340" text-anchor="middle">S</text></g>
<!-- navigation bar -->
<g fill="none" stroke="#d9d9d9"><rect x="444" y="380" width="22" height="133" rx="3" fill="#f3f3f3" stroke="#c8c8c8"/><circle cx="455" cy="399" r="7"/><circle cx="455" cy="399" r="4"/><circle cx="461" cy="384" r="2"/><circle cx="461" cy="509" r="2"/><path d="M446 415.500h18M446 485.500h18M453 411h3M453 455h3M453 479h3"/><path d="M451 433c-2-3-4-5-3-6s2 0 3 2v-7c1-1 2-1 2 0v4-6c1-1 2-1 2 0v6l1-5c1-1 2 0 2 1l-1 5 2-3c1-1 2 0 1 2l-3 7z" fill="#fff"/><path d="M448 437l12 12M448 449l12-12M448 441v-4h4M456 437h4v4M448 445v4h4"/><circle cx="459" cy="447" r="3" fill="#fff"/><path d="M455 460v14M452 463l3-3 3 3M452 471l3 3 3-3M448 467c2-4 12-4 14 0-2 4-12 4-14 0"/><path d="M448 487h3v3h-3zM453 487h3v3h-3zM458 487h3v3h-3zM448 492h10v9h-10z"/><path d="M451 494l5 2.500-5 2.500z" fill="#cdcdcd"/></g>

<!-- partial plan viewport -->
<path d="M26.500 456.500h213v152h-213z" fill="#fff" stroke="#f33" stroke-width="1"/>
<g fill="none" stroke="#ccc" stroke-width="1"><path d="M35.500 458.500h184v147h-184zM220.500 458.500h17v147h-17zM35 565.500h184M35 567.500h184M73.500 565v41M112.500 565v41M221 475.500h16M221 498.500h16M221 547.500h16M221 553.500h16M221 562.500h16M221 580.500h16M221 585.500h16M231.500 553v9M74 584.500h38M74 587.500h38M74 590.500h38M74 593.500h38M74 596.500h38M74 599.500h38M74 602.500h38M86 551.500h90"/><circle cx="229" cy="568" r="6"/></g>
<g stroke="#8a8a8a" stroke-width="1" stroke-dasharray="7 1 4 1 9 1"><path d="M36 566.500h26M74 566.500h21M182 566.500h16M37 570.500h22M38 572.500h30M38 575.500h33M38 577.500h32M38 579.500h34M38 582.500h33M38 584.500h28M38 587.500h33M38 590.500h34M77 570.500h20M77 572.500h35M77 575.500h34M77 577.500h29M77 579.500h34M77 582.500h35M184 570.500h7M198 570.500h7M185 574.500h8M199 574.500h8M184 577.500h8M199 577.500h7M221 467.500h14M221 469.500h8M221 471.500h6M221 500.500h13M221 505.500h6M221 544.500h13M221 583.500h15M221 591.500h10M221 600.500h10M221 602.500h8M85 549.500h10M222 461.500h6M222 463.500h5"/></g>
<path d="M94 468l1-5c2-1 4 1 0 2M98 466c-1-2 2-2 1 0M101 466v-3l2 1 1 2 2-4M108 463c1-1 3-1 2 2l-2 3M112 462l3 0M117 461h3M100 474v-3l3 2 2-3 1 3M107 472l3-1M118 474v-6l4 0M119 471h3M124 473l1-4 3-1M129 469l-3 3 3 0M132 470c-1-3 3-3 2 0M137 467l2 2M114 481v-4c2-1 3 0 4 3M120 479l3-2M115 484l5-1M123 483l2-4M127 481c2-3 3 1 5-2s3 1 5-3M139 476l3-3 3 1M137 483l3-2" fill="none" stroke="#f7a3a3" stroke-width=".9"/>
<path d="M83 486h88v57H83z" fill="#e3e2e8"/><path d="M92 487h77v20H92zM108 507h60v5h-60zM140 512h29v20h-29z" fill="#fff"/>
<path d="M83 486h88.500v56M83 538.500h24M88 518h10v16H88zM107 520h7v14h-7zM121 513h11v18h-11zM123 523h6v6h-6zM134 518h6v10h-6M92 504v14h14v18" fill="none" stroke="#999"/><path d="M83 486h88" stroke="#555" stroke-dasharray="2 1"/><path d="M85 537h22M84 519v12M95 520v12M110 521v11M124 515v6M136 519v8" stroke="#888" stroke-width="2" stroke-dasharray="1 1"/>
<path d="M88.500 487v13M98.500 487v27M107.500 487v26M117.500 487v18M126.500 487v27M136.500 487v24M144.500 488l2 16M155.500 487v18M169.500 487v18M140 511.500h29M140 515.500h12M141 520.500h28M140 530.500h29M103.500 498v14" stroke="#f5ef32" stroke-width="1.500"/>
<path d="M85 506.500h85M148.500 506v29" stroke="#ec35e6" stroke-width="1.500"/>
<path d="M88.500 488v12M98.500 489v26M107.500 488v25M117.500 489v26M126.500 489v26M136.500 488v23M146 490v14M155.500 489v14M169.500 488v15M141 511.500h27M140 520.500h28M140 530.500h28" stroke="#e02a2a" stroke-width="1.500" stroke-dasharray="2 5"/><path d="M98.500 492v20M107.500 491v20M126.500 493v20M136.500 491v16M118 508l3 7M127 508l3 7M142 521h25M148 508v26M169.500 490v12M143 511h24M103 498v14M115 500v13" stroke="#111" stroke-width="1.500" stroke-dasharray="1.500 6"/>

<!-- overall plan -->
<path d="M306 505h89v60h-89z" fill="#e3e3e3"/><path d="M312 507h12v20h-12zM366 530h28v23h-28zM331 507h60v25h-60z" fill="#f4f4f4"/><path d="M323 520h8v42h-8z" fill="#c2c2c2"/><path d="M314 508h8v8h-8zM325 508h7v7h-7zM365 540h8v8h-8z" fill="#8c8c8c"/>
<path d="M306 505.500h89M394.500 505v59M306 555.500h22M307 538v16M311 538h5v16M317 542h6v12M319 545v8M330 541h7v12M333 543v9M338 536h8v16M347 535h13v17h-13zM350 545h6v5h-6zM355 537h5v8M362 535h4v20M366 542h20M375 532v12M308 540l6 12M309 548h7M339 544h6" stroke="#111" stroke-width="1.300" fill="none" stroke-dasharray="6 1 3 .5"/>
<path d="M306 559.500h26" stroke="#333" stroke-dasharray="3 1"/>
<path d="M340.500 507v26M350.500 507v20M360.500 507v26M369.500 507v24M378.500 507v26M386.500 507v45M390.500 507v20M333 512.500h60M333 520.500h60M333 529.500h60M371 538.500h22M371 545.500h22M309 541v12M313 541v11M332 544v9M334 507v26M345.500 507v20M355.500 507v20M365.500 507v24M374.500 507v22M382.500 507v22M310 512h12M310 519h12M380 532v20M391 532v20" stroke="#333" stroke-width="1" stroke-dasharray="3 1 1 2"/>
<path d="M309 525.500h84M371.500 525v31M338.500 510v14M347.500 509v15M357.500 508v16M366.500 509v14M384.500 509v16M335 530h16M352 515h12M374 535h18M376 549h14M316 508v18M374 514h16M334 517h20M360 519h30M343 511h12M368 529h10" stroke="#e3202a" stroke-width="1" stroke-dasharray="4 1"/><path d="M335 509v18M344 510v22M354 510v18M382 533v16M368 551h8M327 512v22" stroke="#dd9436" stroke-dasharray="2 2"/><path d="M342 511v20M362 511v18M380 511v18M389 511v38" stroke="#2f9e3d" stroke-dasharray="1 5"/>
<use href="#redDetail" x="375.500" y="588"/>

<!-- schedules below the sheet -->
<text x="40" y="677" class="ppt">PARTIAL FIRE PROTECTION PLAN</text><path d="M40 677.500h68" stroke="#111" stroke-width=".7"/><path d="M40 678h26v3H40zM40 682h39v3H40zM55 696h38v2.500H55z"/><path d="M95.500 692.500h8v8h-8z" fill="#bbb" stroke="#222"/>
<g fill="none" stroke="#222"><path d="M197.500 665.500h154v59h-154zM197 671.500h155M197 676.500h155M197 681.500h155M197 685.500h155M197 689.500h155M197 694.500h155M197 698.500h155M197 703.500h155M197 707.500h155M197 711.500h155M197 715.500h155M197 720.500h155M204.500 671v49M244.500 671v49M254.500 671v49M263.500 671v49M269.500 671v49M276.500 671v49M293.500 671v49M307.500 671v49M319.500 671v49M328.500 671v49M344.500 671v49M359.500 665.500h46v34h-46zM359 671.500h47"/></g>
<g stroke="#000" stroke-width="2"><path d="M199 673.500h5M221 673.500h6M246 673.500h7M256 673.500h6M265 673.500h3M271 673.500h4M282 673.500h5M297 673.500h6M310 673.500h6M322 673.500h4M334 673.500h6M346 673.500h5"/><path id="rw" d="M246 678h7M257 678h4M265 678h3M272 678h3M279 678h11M297 678h6M311 678h6M322 678h4M334 678h6M347 678h2"/><use href="#rw" y="5"/><use href="#rw" y="9"/><use href="#rw" y="13"/><use href="#rw" y="18"/><use href="#rw" y="22"/><path d="M213 678h22M220 683h9M219 687h10M220 690h9M217 694h14M215 698.500h18M215 703h18M210 712.500h29M256 721.500h30"/></g>
<path d="M201 679v26" stroke="#f01414" stroke-width="4" stroke-linecap="round" stroke-dasharray="0 5"/>
<text x="275" y="670" class="tiny dk" text-anchor="middle">SPRINKLER SUMMARY</text><text x="382" y="670" class="tiny dk" text-anchor="middle">HEAD BOX</text>
<g stroke="#f01414" stroke-width="4" stroke-linecap="round" stroke-dasharray="0 5.700"><path d="M363 674.500h41M363 680.500h41M363 686h30"/><path d="M362 691.500h42M362 697h37" stroke-width="3" stroke-dasharray="0 5"/></g>
</svg>

<div class="cmdwin"><div class="cside"><svg viewBox="0 0 14 34"><path d="M3 2.500h9" stroke="#c9ced5" stroke-dasharray="1 1"/><path d="M4.500 10.500l5 5M9.500 10.500l-5 5" stroke="#dfe2e6"/><path d="M3 31l5-5" stroke="#dfe2e6" stroke-width="2"/><path d="M8 22c-2 3 0 5 3 4l-2-1 1-2z" fill="#dfe2e6" stroke="#dfe2e6"/></svg></div><div class="cmain"><div class="hist">\Local\Temp\Drawing1_1_22459_265c9e0a.sv$ ...<br>Command:</div><label class="prompt"><svg viewBox="0 0 16 10"><path d="M.5 1.500h9v7h-9z" fill="#eee" stroke="#777"/><path d="M2 4l2 1-2 1M5 7h3" stroke="#555" fill="none"/><path d="M11 4h5l-2.500 3z" fill="#777"/></svg><input type="text" aria-label="Command" placeholder="Type a command"><i class="upc"></i></label></div></div>
</div>
</div>

<footer class="status">
<nav class="lts"><button aria-label="Layout menu" class="ham"><svg class="ic"><use href="#bars"/></svg></button><i class="slash"></i><button>Model</button><button class="cur"><span>18X24</span></button><button>24X36</button><i class="slash"></i><button aria-label="New layout"><svg class="ic"><use href="#plus"/></svg></button><i class="slash"></i></nav>
<output class="coords">616'-10 3/4", -20'-8 1/2", 0'-0"</output>
<div class="sb"><button class="md">MODEL</button>
<button aria-label="Grid"><svg class="ic"><use href="#grid"/></svg></button><button class="dd" aria-label="Snap"><svg class="ic"><use href="#dots"/></svg></button><i class="gap"></i><button aria-label="Infer"><svg class="ic"><use href="#snap"/></svg></button><button class="act" aria-label="Dynamic input"><svg class="ic"><use href="#dyn"/></svg></button><button class="act" aria-label="Ortho"><svg class="ic"><use href="#ortho"/></svg></button><button class="dd" aria-label="Polar"><svg class="ic"><use href="#polar"/></svg></button><button class="dd" aria-label="Isometric"><svg class="ic"><use href="#iso"/></svg></button><button aria-label="Tracking"><svg class="ic"><use href="#ang"/></svg></button><button class="act dd" aria-label="Object snap"><svg class="ic"><use href="#osnap"/></svg></button><i class="gap"></i><button aria-label="Lineweight"><svg class="ic"><use href="#lw"/></svg></button><button class="act" aria-label="Transparency"><svg class="ic"><use href="#check"/></svg></button><button aria-label="Cycling"><svg class="ic"><use href="#sel"/></svg></button><button class="act dd" aria-label="3D snap"><svg class="ic"><use href="#cube"/></svg></button><i class="gap"></i><button aria-label="UCS"><svg class="ic"><use href="#ucs"/></svg></button><button class="dd" aria-label="Filter"><svg class="ic"><use href="#cube2"/></svg></button><button class="act dd" aria-label="Gizmo"><svg class="ic"><use href="#giz"/></svg></button><i class="gap"></i><button aria-label="Annotation"><svg class="ic"><use href="#annv"/></svg></button><button aria-label="Visibility"><svg class="ic"><use href="#anns"/></svg></button><button aria-label="Auto scale"><svg class="ic"><use href="#anns"/></svg></button><button aria-label="Viewport lock"><svg class="ic"><use href="#padl"/></svg></button><button aria-label="Maximize viewport"><svg class="ic"><use href="#vps"/></svg></button><button class="dd num">0.002340</button><button aria-label="Customize"><svg class="ic"><use href="#bars"/></svg></button></div>
</footer>
</main>

<aside class="browser"><div class="btab">ing Book</div><div class="bar2"></div><div class="bm">AFSA <span>✥</span></div><div class="h you">You</div><div class="h aper">aper</div><div class="h mode">ur mode</div></aside>

<ul class="scales">
<li><button>Scale to fit</button></li><li><button>1:1 / 100%</button></li><li><button>1:2 / 50%</button></li><li><button>1:4 / 25%</button></li><li><button>1:5 / 20%</button></li><li><button>1:8 / 12.5%</button></li><li><button>1:10 / 10%</button></li><li><button>1:16 / 6.25%</button></li><li><button>1:20 / 5%</button></li><li><button>1:30 / 3.33%</button></li><li><button>1:40 / 2.5%</button></li><li><button>1:50 / 2%</button></li><li><button>1:100 / 1%</button></li><li><button>2:1 / 200%</button></li><li><button>4:1 / 400%</button></li><li><button>8:1 / 800%</button></li><li><button>10:1 / 1000%</button></li><li><button>100:1 / 10000%</button></li><li><button>1/128" = 1'-0" / 0.07%</button></li><li><button>1/64" = 1'-0" / 0.13%</button></li><li><button>1/32" = 1'-0" / 0.26%</button></li><li><button>1/16" = 1'-0" / 0.52%</button></li><li><button>3/32" = 1'-0" / 0.78%</button></li><li><button>1/8" = 1'-0" / 1.04%</button></li><li><button>3/16" = 1'-0" / 1.56%</button></li><li><button>1/4" = 1'-0" / 2.08%</button></li>
</ul>
</div>

<nav class="taskbar">
<svg viewBox="0 0 16 16"><path d="M0 0h7.500v7.500H0zM8.500 0H16v7.500H8.500zM0 8.500h7.500V16H0zM8.500 8.500H16V16H8.500z" fill="#3fb4ea"/></svg>
<svg viewBox="0 0 16 16"><path d="M4 1h11v9H4z" fill="#eee"/><path d="M1 4h9v9H1z" fill="#8b8b8b"/></svg>
<svg viewBox="0 0 16 16"><path d="M0 1h6l2 2h8v12H0z" fill="#f6c64b"/><path d="M0 5h16v10H0z" fill="#fbd86d"/><path d="M3 10h10v5H3z" fill="#3a8ac9"/></svg>
<svg viewBox="0 0 16 16"><path d="M8 1c5 2 8 4 7 8s-4 6-7 6-7-3-7-6 2-6 3-7l1 2z" fill="#ff8a2a"/><path d="M10 2c4 2 5 5 4 8L9 5z" fill="#ffd23e"/><circle cx="8" cy="9" r="4" fill="#8c4be0"/><path d="M2 7c3-1 6 0 7 3-2 2-5 1-7-3" fill="#ff5a36"/></svg>
<svg viewBox="0 0 16 16"><circle cx="8" cy="8" r="7.500" fill="#e23c30"/><path d="M8 8L1.500 4.500A7.500 7.500 0 0 0 7 15.500z" fill="#31a853"/><path d="M8 8l-1 7.500A7.500 7.500 0 0 0 15 5H8z" fill="#fbc116"/><circle cx="8" cy="8" r="3.500" fill="#3f80ee" stroke="#fff" stroke-width="1.200"/></svg>
<svg viewBox="0 0 16 16"><path d="M1 5h12v9H3z" fill="#5560c4"/><path d="M0 5h8v8H0z" fill="#3d47a8"/><path d="M2 7h4M4 7v5" stroke="#fff" stroke-width="1.300"/><circle cx="13" cy="4" r="4.500" fill="#2e9a35"/><path d="M11 4l1.500 1.500L15 2.500" stroke="#063" fill="none" stroke-width="1.300"/></svg>
<svg viewBox="0 0 16 16"><path d="M0 0h16v16H0z" fill="#ececec"/><path d="M1.500 1.500h13v13h-13z" fill="#26262b"/><path d="M12 5.500C9-.5 3 3 3 8s6 8.500 9 2.500" fill="none" stroke="#fff" stroke-width="1.800"/><circle cx="8" cy="8" r="2.300" fill="#e0314b"/></svg>
<svg viewBox="0 0 16 16"><circle cx="8" cy="8" r="7.500" fill="#1fce5f"/><path d="M3.500 5.500c3-1 6-1 9 .7M4 8.300c2.500-.8 5-.5 7.500.7M4.500 11c2-.6 4-.3 6 .6" stroke="#0a2312" stroke-width="1.400" fill="none"/></svg>
<svg viewBox="0 0 16 16"><path d="M0 0h16v16H0z" fill="#c22386"/><path d="M0 0h7L0 12z" fill="#4447c8"/><circle cx="8" cy="7.500" r="5" fill="none" stroke="#fff" stroke-width="1.300"/><circle cx="8" cy="7.500" r="2" fill="none" stroke="#fff"/><path d="M10 6v3c1 2 3 0 3-2" stroke="#fff" fill="none"/></svg>
<svg viewBox="0 0 16 16"><circle cx="8" cy="8" r="7.500" fill="#1aa3e0"/><path d="M4 13c0-6 1-9 5-9 5 0 3 5-2 5l5 4" stroke="#fff" stroke-width="2" fill="none"/></svg>
<svg viewBox="0 0 16 16"><path d="M5 1h10v13H5z" fill="#36a5e8"/><path d="M10 1h5v6h-5z" fill="#7cd2f8"/><path d="M0 4h9v9H0z" fill="#0f6cbd"/><circle cx="4.500" cy="8.500" r="2.200" fill="none" stroke="#fff" stroke-width="1.300"/></svg>
<svg viewBox="0 0 16 16"><path d="M0 0h16v16H0z" fill="#efefef"/><path d="M1 1h7L3 12H1z" fill="#8b1116"/><path d="M8 1h7v13h-4z" fill="#d22a2f"/><path d="M8 4l-3 10M8 4l3 10M8 3v13" stroke="#111" stroke-width="1.200"/></svg>
<svg viewBox="0 0 16 16"><path d="M2 8c0-9 12-9 12 0v8H2z" fill="#2790c8"/><path d="M4 9h8v6H4z" fill="#f4f4f4"/><circle cx="6" cy="6" r="2" fill="#fff"/><circle cx="10" cy="6" r="2" fill="#fff"/><path d="M6.500 8h3L8 10z" fill="#f29b25"/><circle cx="6" cy="6" r=".8"/><circle cx="10" cy="6" r=".8"/><path d="M3 14h4v2H3zM9 14h4v2H9z" fill="#f29b25"/></svg>
<svg viewBox="0 0 16 16"><circle cx="8" cy="8" r="6" fill="none" stroke="#8e979f" stroke-width="4" stroke-dasharray="3 1.700"/><circle cx="8" cy="8" r="4.500" fill="#a9b1b8"/><circle cx="8" cy="8" r="2.500" fill="#1d72b8"/></svg>
<svg viewBox="0 0 16 16"><path d="M0 1h16v14H0z" fill="#3b3b3b"/><path d="M0 1h16v2H0z" fill="#bdbdbd"/><path d="M3 6l3 2-3 2M8 11h5" stroke="#fff" fill="none" stroke-width="1.400"/></svg>
<svg viewBox="0 0 16 16"><path d="M11 0l5 2v12l-5 2-7-7-3 2-1-1 3-3-3-3 1-1 3 2zM12 4L7 8l5 4z" fill="#28a0ea" fill-rule="evenodd"/></svg>
<svg viewBox="0 0 16 16"><path d="M1 1h11v12H1z" fill="#f4f4f4"/><path d="M3 3h8v8H3z" fill="none" stroke="#e0542c" stroke-width="2" stroke-dasharray="2 1"/><path d="M9 13l6-5M11 9l3 5" stroke="#3d94d6" stroke-width="1.300"/></svg>
</nav>

<svg class="notes" viewBox="0 0 828 892" preserveAspectRatio="xMinYMin slice">
<path d="M0 0h4v4H0zM411 0h6v4h-6zM0 447h2v6H0zM826 447h2v6h-2zM826 0h2v3h-2z" fill="#7a6808"/>
<path d="M476 701h200v54H476zM264 762h199v54H264z" fill="#000" fill-opacity=".15"/>
<g fill="#fff" stroke="#f00" stroke-width="2"><path d="M477 702h197v51H477z"/><path d="M265 763h196v50H265z"/></g>
<g fill="none" stroke="#f00" stroke-width="1.400"><path d="M674 728h44l38 74M461 788h47l229 70"/><path d="M757 789l-1 14-12-6M726 848l12 10-16 3" stroke-width="1.800"/></g>
<text x="484" y="737">Select 1/8"</text><text x="272" y="797">Click here</text>
</svg>
</body>
</html>
```
FILE: styles.css
```css
* { box-sizing: border-box; }
body {
  margin: 0;
  min-height: 100vh;
  display: flex;
  flex-direction: column;
  position: relative;
  overflow: hidden;
  background: #000;
  color: #dde0e4;
  font: 7px/10px "Open Sans", "Noto Sans", sans-serif;
}
button, input, select {
  font: inherit;
  color: inherit;
  background: none;
  border: 0;
  padding: 0;
  margin: 0;
}
button { display: flex; align-items: center; white-space: nowrap; }
svg { display: block; flex: none; }
.defs { position: absolute; width: 0; height: 0; }
.ic { width: 12px; height: 12px; }
.ic.sm { width: 10px; height: 10px; }
.ic.xs { width: 9px; height: 9px; }
.rb { background: #50565e; width: 11px; height: 11px; }
.car, .dd::after {
  content: "";
  flex: none;
  width: 0;
  height: 0;
  border: 2px solid transparent;
  border-top-color: #c3c8ce;
  border-bottom-width: 0;
}
.dd::after { margin-left: 4px; }
.vsep { width: 1px; height: 11px; background: #4d5664; }

.desktop { flex: 1; display: flex; position: relative; background: #020617; border-top: 1px solid #e4e8ea; }
.app {
  flex: 1;
  min-width: 0;
  display: flex;
  flex-direction: column;
  background: #222933;
  border: solid #0e7aa5;
  border-width: 1px 0;
  border-right: 2px solid #0b3145;
}

.title { display: flex; align-items: center; height: 18px; padding-left: 8px; }
.logo svg { width: 13px; height: 13px; }
.logo { margin-right: 4px; }
.qat { display: flex; gap: 3px; margin-left: 7px; }
.qat .dd::after { margin: 0 2px; }
.share { margin-left: 3px; gap: 2px; color: #79bdea; }
.title h1 { font: inherit; margin: 0 8px 0 24px; color: #e3e6e9; white-space: nowrap; }
.title .doc { flex: 1; }
.tri { border: 2px solid transparent; border-left: 3px solid #c3c8ce; border-right: 0; margin-right: 4px; }
.find { width: 111px; height: 12px; background: #454f61; padding: 0 2px; font-style: italic; }
.find::placeholder { color: #b6bcc6; opacity: 1; }
.acct, .links { display: flex; align-items: center; gap: 5px; }
.acct { margin-left: 4px; }
.links { margin-left: 30px; }
.wbtns { display: flex; gap: 16px; margin-left: 48px; padding-right: 8px; }

.menubar { display: flex; align-items: center; gap: 15px; height: 14px; padding-left: 9px; color: #a9afb8; border-bottom: 1px solid #2f3743; }
.menubar .doc-btns { margin-left: auto; gap: 8px; padding-right: 5px; }

.tabs { display: flex; align-items: center; gap: 1px; height: 15px; padding: 3px 0 0 3px; color: #b9bec6; }
.tabs button { height: 12px; padding: 0 6px; }
.tabs .on { background: #3b4453; color: #e3e6e9; padding: 0 5px; }
.tabs .ctx { background: #11658f; color: #fff; margin-right: 14px; border: 1px solid #1d84b5; }
.pill { display: flex; width: 10px; height: 6px; background: #e3e6e9; margin-right: 2px; justify-content: center; align-items: center; }
.pill i { border: 1px solid transparent; border-top: 0; border-bottom: 2px solid #222933; }

.ribbon { display: flex; height: 74px; margin: 0 3px 2px 1px; background: #3b4453; }
.panel { display: flex; flex-direction: column; padding: 1px 0 0 4px; border-right: 1px solid #232b37; }
.panel:last-child { flex: 1; border: 0; }
.panel footer { display: flex; align-items: center; justify-content: center; height: 12px; margin-top: auto; }
.cols, .line { display: flex; }
.cmd { height: 15px; gap: 3px; }
.cmd.dd::after { margin-left: 2px; }
.big { height: 23px; gap: 2px; }
.big svg { width: 20px; height: 20px; }
.c1 { width: 44px; }
.c2 { width: 72px; }
.c3 { width: 65px; }
.draw { width: 236px; }
.insert { width: 147px; }
.insert .cells { display: grid; grid-template-columns: 61px 59px 1fr; }
.insert .line { grid-column: 1 / 4; gap: 6px; }
.insert .line .cmd { gap: 2px; }
.elev { width: 49px; }
.two { display: grid; grid-template-columns: 23px 1fr; }
.proc { width: 170px; }
.c5 { width: 66px; }
.c5 .line { height: 15px; gap: 4px; }
.c6 { width: 24px; }
.lone { width: 12px; justify-content: center; }
.c7 .line { gap: 2px; padding-left: 2px; height: 15px; align-items: center; }
.stk { display: flex; flex-direction: column; align-items: center; }
.stk.dd::after { margin: 0; }
.tools { width: 85px; }
.tools .cells { display: grid; grid-template-columns: 23px 22px 21px 1fr; grid-auto-rows: 15px; }
.clean { width: 49px; }
.coll { padding-left: 0; }
.coll .col { padding-left: 14px; }
.coll .panel footer, .coll footer { justify-content: flex-start; padding-left: 3px; }

.files, .lts { display: flex; align-items: center; gap: 5px; }
.files { height: 15px; padding-left: 9px; }
.slash { width: 1px; height: 10px; background: #59616d; transform: skewX(-22deg); margin: 0 3px; }
.slash.wide { margin: 0 6px 0 8px; }
.files .cur, .lts .cur { height: 15px; padding: 0 8px 0 10px; gap: 4px; color: #fff; background: #3b4453; clip-path: polygon(6px 0, 100% 0, calc(100% - 6px) 100%, 0 100%); font-weight: 600; }
.files .cur { margin-right: -3px; }

.tb1, .tb2 { display: flex; align-items: center; background: #3b4453; margin-right: 1px; }
.tb1 { height: 20px; gap: 3px; padding-left: 2px; }
.tb2 { height: 17px; gap: 2px; border-top: 1px solid #2c3441; }
.grip { width: 2px; height: 9px; background: repeating-linear-gradient(#8d95a1 0 2px, transparent 2px 4px); }
.box { display: flex; align-items: center; height: 14px; background: #fff; border: 1px solid #c8ccd2; color: #111; padding: 0 3px; gap: 3px; }
.box select { flex: 1; min-width: 0; appearance: none; color: #111; opacity: 1; }
.box select:disabled { color: #888; }
.box::after { content: ""; width: 4px; height: 4px; border: solid #888; border-width: 0 1px 1px 0; transform: rotate(45deg); margin: -2px 2px 0; }
.lyr { width: 43px; height: 10px; }
.w1 { width: 187px; }
.w2 { width: 94px; }
.w3 { width: 100px; }
.w4 { width: 79px; }
.w5 { width: 75px; background: #f4f4f4; }
.icset { display: flex; gap: 2px; }
.sw { width: 8px; height: 8px; background: #f00; border: 1px solid #a00; }
.ln { width: 37px; height: 1px; background: #000; }
.ln.thin { width: 22px; background: #777; }
.bar { display: flex; align-items: center; gap: 2px; height: 14px; padding: 0 3px 0 1px; border: 1px solid #333b49; }
.bar .grip { margin-right: 1px; }
.bar .sz { width: 11px; height: 11px; margin-right: 1px; justify-content: center; background: #1f63ac; color: #fff; font-size: 9px; }
.bar .fr { font-size: 7px; }
.bar .dk { background: #1b4474; }

.work { flex: 1; display: flex; min-height: 0; }
.pals { width: 16px; display: flex; flex-direction: column; gap: 3px; padding: 1px; background: #222933; }
.pal { flex: 1; display: flex; flex-direction: column; align-items: center; background: #3b4453; padding-top: 3px; }
.pal span { writing-mode: vertical-rl; transform: rotate(180deg); margin: auto; }
.p2 span { margin-top: 145px; }
.hgrip { width: 8px; height: 2px; background: repeating-linear-gradient(90deg, #aab0ba 0 1px, transparent 1px 2px); }
.canvas { flex: 1; position: relative; min-width: 0; background: #8a8a8a; overflow: hidden; margin-right: 1px; }
.dwg { position: absolute; inset: 0; width: 100%; height: 100%; }
.dwg text { fill: #222; font-family: "Liberation Sans", Arial, sans-serif; }
.dwg .lbl { font: 7px "Open Sans", sans-serif; fill: #000; }
.dwg .af { font-size: 8px; font-weight: bold; }
.dwg .tb { font-size: 7px; }
.dwg .fp { font-size: 9px; }
.dwg .tiny { font-size: 4px; font-weight: bold; }
.dwg .ppt { font-size: 4px; font-weight: bold; }
.dwg .cube { font-size: 6px; fill: #777; }
.dwg .dir { font-size: 9px; font-weight: bold; fill: #c6c6c6; }

.cmdwin { position: absolute; left: 273px; bottom: 1px; width: 232px; height: 34px; display: flex; font: 7px/9px "DejaVu Sans Mono", monospace; color: #222; }
.cside { width: 14px; background: #454d5c; }
.cside svg { width: 14px; height: 34px; }
.cmain { flex: 1; display: flex; flex-direction: column; background: #ababab; }
.hist { flex: 1; padding: 3px 2px; white-space: nowrap; }
.prompt { display: flex; align-items: center; height: 12px; padding: 0 3px 0 2px; gap: 4px; background: #dadada; }
.prompt svg { width: 16px; height: 10px; }
.prompt input { flex: 1; min-width: 0; font-style: italic; }
.prompt input::placeholder { color: #777; opacity: 1; }
.upc { border: 2px solid transparent; border-top: 0; border-bottom: 3px solid #666; }

.status { display: flex; align-items: center; height: 22px; padding: 0 0 0 9px; border-top: 2px solid #3b4453; }
.status .lts { width: 182px; }
.coords { width: 112px; height: 15px; line-height: 15px; text-align: center; background: #3b4453; white-space: nowrap; }
.sb { flex: 1; display: flex; align-items: center; justify-content: space-between; margin-left: 3px; }
.sb button { height: 15px; justify-content: center; padding: 0 1px; background: #3b4453; }
.sb .md { padding: 0 2px; }
.sb .act { background: linear-gradient(90deg, #5280bb 14px, #3b4453 14px); }
.sb .dd::after { margin: 0 3px; border-width: 3px 3px 0; }
.gap { width: 1px; }

.browser { width: 31px; overflow: hidden; color: #d9d9de; white-space: nowrap; }
.btab { height: 28px; padding-top: 9px; background: #201f25; }
.bar2 { height: 22px; background: #1a191f; border-top: 2px solid #2d2c33; }
.bm { height: 20px; padding-top: 7px; background: #2a2930; }
.h { color: #fff; font-family: "Liberation Sans", Arial, sans-serif; font-weight: 700; border-bottom: 1px solid #1b2438; }
.you { height: 66px; padding: 37px 0 0 1px; font-size: 21px; line-height: 22px; }
.aper { height: 42px; padding-top: 22px; font-size: 14px; line-height: 16px; }
.mode { height: 22px; margin-top: 9px; padding-top: 5px; font-size: 9px; line-height: 12px; background: #0f172a; border: 0; }

.scales { position: absolute; right: 2px; bottom: 20px; width: 111px; height: 383px; margin: 0; padding: 0 0 0 12px; list-style: none; overflow: hidden; display: flex; flex-direction: column; justify-content: flex-end; background: #464e60; border: 1px solid #3b4354; color: #fff; }
.scales button { height: 15px; font-weight: 600; }
.scales li { flex: none; }

.taskbar { display: flex; justify-content: space-between; align-items: flex-end; width: 455px; height: 22px; margin-left: 10px; overflow: hidden; }
.taskbar svg { width: 15px; height: 15px; }
.notes { position: absolute; inset: 0; width: 100%; height: 100%; pointer-events: none; }
.notes text { font: 34px "Liberation Sans", Arial, sans-serif; fill: #f00; }
```
